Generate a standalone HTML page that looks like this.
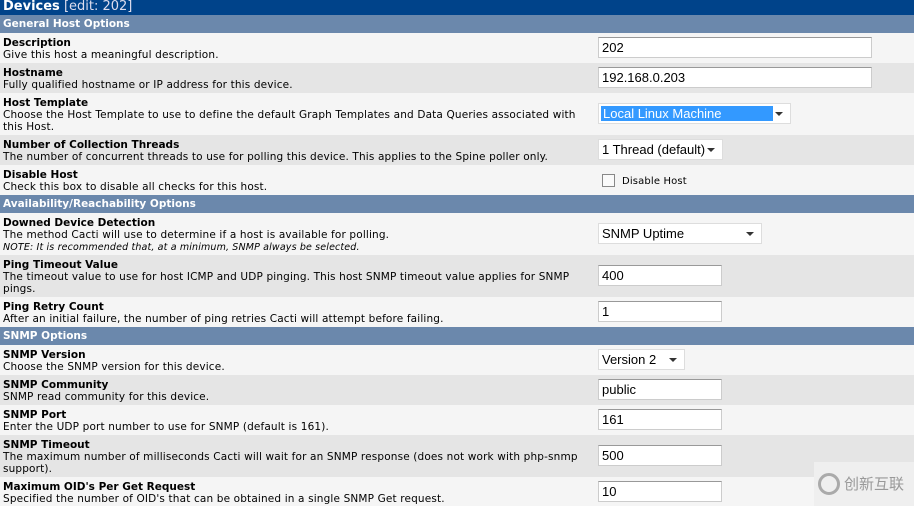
<!DOCTYPE html>
<html><head><meta charset="utf-8"><style>
*{margin:0;padding:0;box-sizing:border-box}
body{width:914px;height:506px;overflow:hidden;background:#f5f5f5;font-family:"DejaVu Sans",Verdana,sans-serif;font-size:11px;letter-spacing:0.15px;color:#000;position:relative}
.r{position:absolute;left:0;width:914px}
.hd{background:#00438a;color:#fff;top:0;height:15px;font-size:13px;padding-left:3px;line-height:13px;letter-spacing:0}
.hd span{font-weight:normal;color:#dde}
.sec{background:#6b88ac;color:#fff;font-weight:bold;height:18px;line-height:18px;padding-left:3px;font-size:10.5px;letter-spacing:0}
.l{background:#f5f5f5}.g{background:#e5e5e5}
.t{position:absolute;left:3px;top:4px;width:580px;line-height:12px;font-size:10.5px}
.t b{display:block;letter-spacing:0}
.t i{font-size:9.5px}
.in{position:absolute;left:598px;height:21px;background:#fff;border:1px solid #ccc;border-top-color:#999;font-family:"Liberation Sans",Arial,sans-serif;font-size:13px;line-height:19px;padding-left:3px;letter-spacing:0}
.sel:after{content:"";position:absolute;right:7px;top:8px;border-left:4px solid transparent;border-right:4px solid transparent;border-top:4px solid #333}
.sel{border-color:#ddd}
</style></head><body>
<div class="r hd"><b>Devices</b> <span>[edit: 202]</span></div>
<div class="r sec" style="top:15px">General Host Options</div>
<div class="r l" style="top:33px;height:30px"><div class="t"><b>Description</b>Give this host a meaningful description.</div></div>
<div class="r g" style="top:63px;height:30px"><div class="t"><b>Hostname</b>Fully qualified hostname or IP address for this device.</div></div>
<div class="r l" style="top:93px;height:42px"><div class="t"><b>Host Template</b>Choose the Host Template to use to define the default Graph Templates and Data Queries associated with this Host.</div></div>
<div class="r g" style="top:135px;height:30px"><div class="t"><b>Number of Collection Threads</b>The number of concurrent threads to use for polling this device. This applies to the Spine poller only.</div></div>
<div class="r l" style="top:165px;height:30px"><div class="t"><b>Disable Host</b>Check this box to disable all checks for this host.</div></div>
<div class="r sec" style="top:195px">Availability/Reachability Options</div>
<div class="r l" style="top:213px;height:42px"><div class="t"><b>Downed Device Detection</b>The method Cacti will use to determine if a host is available for polling.<br><i>NOTE: It is recommended that, at a minimum, SNMP always be selected.</i></div></div>
<div class="r g" style="top:255px;height:42px"><div class="t"><b>Ping Timeout Value</b>The timeout value to use for host ICMP and UDP pinging. This host SNMP timeout value applies for SNMP pings.</div></div>
<div class="r l" style="top:297px;height:30px"><div class="t"><b>Ping Retry Count</b>After an initial failure, the number of ping retries Cacti will attempt before failing.</div></div>
<div class="r sec" style="top:327px">SNMP Options</div>
<div class="r l" style="top:345px;height:30px"><div class="t"><b>SNMP Version</b>Choose the SNMP version for this device.</div></div>
<div class="r g" style="top:375px;height:30px"><div class="t"><b>SNMP Community</b>SNMP read community for this device.</div></div>
<div class="r l" style="top:405px;height:30px"><div class="t"><b>SNMP Port</b>Enter the UDP port number to use for SNMP (default is 161).</div></div>
<div class="r g" style="top:435px;height:42px"><div class="t"><b>SNMP Timeout</b>The maximum number of milliseconds Cacti will wait for an SNMP response (does not work with php-snmp support).</div></div>
<div class="r l" style="top:477px;height:29px"><div class="t"><b>Maximum OID's Per Get Request</b>Specified the number of OID's that can be obtained in a single SNMP Get request.</div></div>

<div class="in" style="top:37px;width:274px">202</div>
<div class="in" style="top:67px;width:274px">192.168.0.203</div>
<div class="in sel" style="top:103px;width:193px;padding:2px"><div style="background:#3399ff;color:#fff;width:172px;height:15px;line-height:15px;padding-left:2px">Local Linux Machine</div></div>
<div class="in sel" style="top:139px;width:125px">1 Thread (default)</div>
<div style="position:absolute;left:602px;top:174px;width:13px;height:13px;border:1px solid #888;background:#fafafa"></div>
<div style="position:absolute;left:622px;top:176px;font-size:10px">Disable Host</div>
<div class="in sel" style="top:223px;width:164px">SNMP Uptime</div>
<div class="in" style="top:265px;width:124px">400</div>
<div class="in" style="top:301px;width:124px">1</div>
<div class="in sel" style="top:349px;width:87px">Version 2</div>
<div class="in" style="top:379px;width:124px">public</div>
<div class="in" style="top:409px;width:124px">161</div>
<div class="in" style="top:445px;width:124px">500</div>
<div class="in" style="top:481px;width:124px">10</div>
<div style="position:absolute;left:814px;top:462px;width:100px;height:44px;background:#efefef;color:#999;font-family:'Noto Sans CJK SC',sans-serif;font-size:15px;line-height:44px;padding-left:30px;letter-spacing:0">创新互联
<div style="position:absolute;left:4px;top:11px;width:22px;height:22px;border:3px solid #aaa;border-radius:50%"></div></div>
</body></html>
